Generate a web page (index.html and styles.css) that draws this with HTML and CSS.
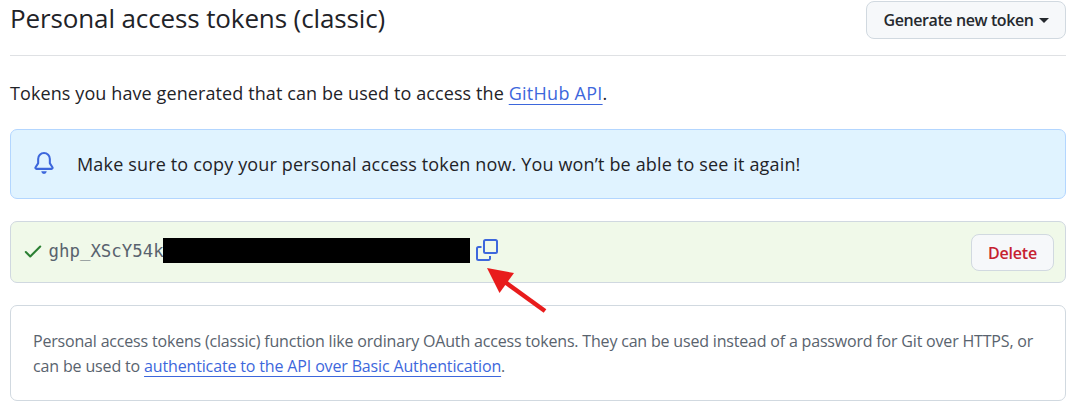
FILE: index.html
```html
<!DOCTYPE html>
<html lang="en">
<head>
<meta charset="utf-8">
<title>Personal access tokens (classic)</title>
<link rel="stylesheet" href="styles.css">
</head>
<body>
<main class="page">
  <header class="subhead">
    <h1 class="title">Personal access tokens (classic)</h1>
    <button class="btn btn-generate">Generate new token<span class="caret"></span></button>
  </header>
  <p class="intro">Tokens you have generated that can be used to access the <a class="link link-api" href="#">GitHub API</a>.</p>
  <section class="flash">
    <svg class="bell" viewBox="0 0 16 16"><path d="M8 16a2 2 0 0 0 1.985-1.75c.017-.137-.097-.25-.235-.25h-3.5c-.138 0-.252.113-.235.25A2 2 0 0 0 8 16ZM3 5a5 5 0 0 1 10 0v2.947c0 .05.015.098.042.139l1.703 2.555A1.519 1.519 0 0 1 13.482 13H2.518a1.516 1.516 0 0 1-1.263-2.36l1.703-2.554A.255.255 0 0 0 3 7.947Zm5-3.5A3.5 3.5 0 0 0 4.5 5v2.947c0 .346-.102.683-.294.97l-1.703 2.556a.017.017 0 0 0-.003.01l.001.006c0 .002.002.004.004.006l.006.004.007.001h10.964l.007-.001.006-.004.004-.006.001-.007a.017.017 0 0 0-.003-.01l-1.703-2.554a1.745 1.745 0 0 1-.294-.97V5A3.5 3.5 0 0 0 8 1.5Z"/></svg>
    <span class="flash-text">Make sure to copy your personal access token now. You won’t be able to see it again!</span>
  </section>
  <section class="token">
    <div class="token-value">
      <svg class="check" viewBox="0 0 16 16"><path d="M13.78 4.22a.75.75 0 0 1 0 1.06l-7.25 7.25a.75.75 0 0 1-1.06 0L2.22 9.28a.751.751 0 0 1 .018-1.042.751.751 0 0 1 1.042-.018L6 10.94l6.72-6.72a.75.75 0 0 1 1.06 0Z"/></svg>
      <code class="token-code">ghp_XScY54k</code><span class="redaction"></span>
      <svg class="copy" viewBox="0 0 22 22"><rect x="8" y="1" width="13" height="13" rx="1.500"/><path d="M5.500 8H2.500A1.500 1.500 0 0 0 1 9.500V19.500A1.500 1.500 0 0 0 2.500 21H12.500A1.500 1.500 0 0 0 14 19.500V17"/></svg>
    </div>
    <button class="btn btn-delete">Delete</button>
    <svg class="arrow" viewBox="0 0 62 50"><path d="M58 43L18 14" stroke="#e81c1c" stroke-width="4.500"/><path d="M0 0L27 5L12.500 25Z" fill="#e81c1c"/></svg>
  </section>
  <section class="note">
    <p class="note-line">Personal access tokens (classic) function like ordinary OAuth access tokens. They can be used instead of a password for Git over HTTPS, or</p>
    <p class="note-line note-end">can be used to <a class="link" href="#">authenticate to the API over Basic Authentication</a>.</p>
  </section>
</main>
</body>
</html>
```
FILE: styles.css
```css
* { box-sizing: border-box; }
body { margin: 0; background: #fff; color: #1f2328; font-family: "Segoe UI", "Open Sans", "Noto Sans", sans-serif; }
.page { width: 1073px; height: 412px; padding: 0 7px 0 10px; overflow: hidden; }
.subhead { display: flex; justify-content: space-between; height: 56px; border-bottom: 1px solid #dfe1e4; }
.title { margin: 0; font-size: 26px; line-height: 36px; font-weight: 400; white-space: nowrap; letter-spacing: -.12px; }
.btn { font-family: inherit; border: 1px solid #d1d9e0; border-radius: 8px; background: #f6f8fa; font-weight: 600; white-space: nowrap; }
.btn-generate { display: flex; align-items: center; justify-content: center; gap: 5px; width: 200px; height: 38px; margin-top: 1px; padding: 0; font-size: 16px; letter-spacing: -.4px; color: #25292e; }
.caret { border: 5px solid transparent; border-top-color: #25292e; border-bottom: 0; }
.intro { margin: 22px 0 0; height: 51px; line-height: 30px; font-size: 18px; letter-spacing: .1px; white-space: nowrap; }
.link { color: #3d67dc; text-decoration: underline; text-decoration-thickness: 1px; text-underline-offset: 4px; }
.link-api { letter-spacing: .26px; }
.flash { display: flex; align-items: center; height: 70px; padding-left: 22px; border: 1px solid #b3d6ff; border-radius: 7px; background: #e0f3ff; }
.bell { width: 22px; height: 22px; fill: #3d67dc; margin: 0 22px 2px 0; }
.flash-text { font-size: 18px; letter-spacing: .16px; white-space: nowrap; }
.token { position: relative; display: flex; align-items: center; justify-content: space-between; height: 62px; margin-top: 22px; padding: 0 11px; border: 1px solid #d0d8e0; border-radius: 7px; background: #f0f9e9; }
.token-value { display: flex; align-items: center; padding-bottom: 3px; }
.check { width: 22px; height: 22px; fill: #2b8033; margin-right: 4px; }
.token-code { width: 115px; padding-left: .5px; font-family: "DejaVu Sans Mono", monospace; font-size: 17.4px; color: #59636e; }
.redaction { width: 307px; height: 25px; background: #000; }
.copy { width: 22px; height: 22px; margin: 0 0 1px 6px; fill: none; stroke: #3d67dc; stroke-width: 2; }
.btn-delete { width: 83px; height: 37px; padding: 2px 0 0; font-size: 16px; letter-spacing: -.2px; color: #c5212f; }
.arrow { position: absolute; left: 476px; top: 46px; width: 62px; height: 50px; fill: none; z-index: 1; }
.note { height: 96px; margin-top: 22px; padding: 23px 22px; border: 1px solid #d1d9e0; border-radius: 7px; color: #59636e; font-size: 16px; }
.note-line { margin: 0; line-height: 25px; white-space: nowrap; letter-spacing: -.185px; }
.note-end { letter-spacing: -.15px; }
```
